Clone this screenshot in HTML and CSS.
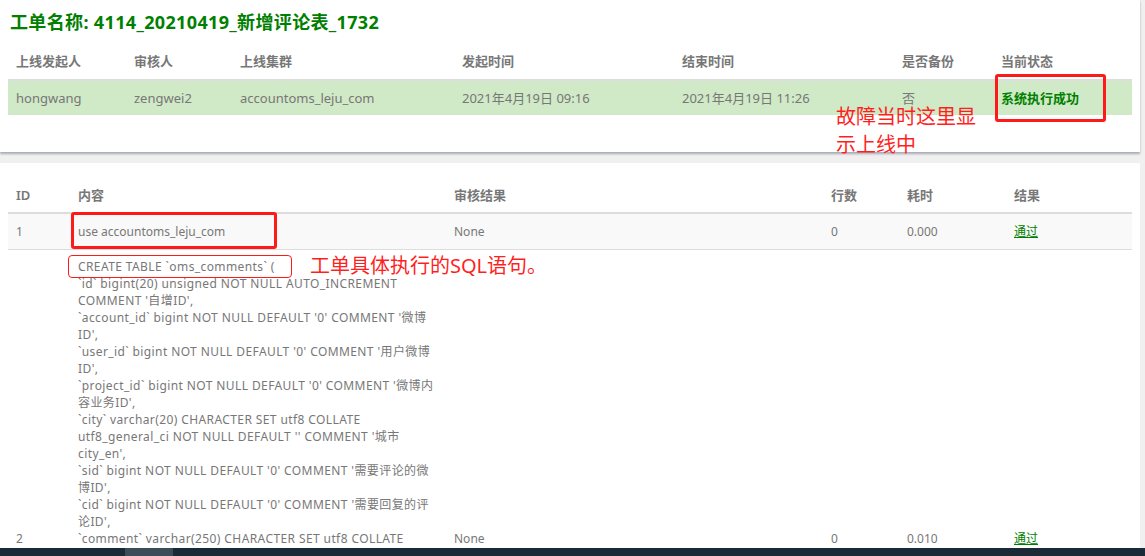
FILE: index.html
```html
<!DOCTYPE html>
<html lang="zh-CN">
<head>
<meta charset="utf-8">
<title>工单详情</title>
<link rel="stylesheet" href="styles.css">
</head>
<body>
<section class="panel panel-top">
  <h2 class="title">工单名称: 4114_20210419_新增评论表_1732</h2>
  <table class="info-table">
    <colgroup>
      <col class="c1"><col class="c2"><col class="c3"><col class="c4"><col class="c5"><col class="c6"><col class="c7">
    </colgroup>
    <thead>
      <tr><th>上线发起人</th><th>审核人</th><th>上线集群</th><th>发起时间</th><th>结束时间</th><th>是否备份</th><th>当前状态</th></tr>
    </thead>
    <tbody>
      <tr class="ok-row">
        <td>hongwang</td><td>zengwei2</td><td>accountoms_leju_com</td><td>2021年4月19日 09:16</td><td>2021年4月19日 11:26</td><td>否</td>
        <td><div class="anchor"><span class="status">系统执行成功</span><span class="hl-box hl-status"></span></div></td>
      </tr>
    </tbody>
  </table>
  <div class="note note-status">故障当时这里显示上线中</div>
</section>

<section class="panel panel-list">
  <table class="sql-table">
    <colgroup>
      <col class="s1"><col class="s2"><col class="s3"><col class="s4"><col class="s5"><col class="s6">
    </colgroup>
    <thead>
      <tr><th>ID</th><th>内容</th><th>审核结果</th><th>行数</th><th>耗时</th><th>结果</th></tr>
    </thead>
    <tbody>
      <tr class="row-odd">
        <td>1</td>
        <td><div class="anchor">use accountoms_leju_com<span class="hl-box hl-use"></span></div></td>
        <td>None</td><td>0</td><td>0.000</td><td><a class="pass" href="#">通过</a></td>
      </tr>
      <tr class="row-even">
        <td>2</td>
        <td>
          <div class="anchor sql">CREATE TABLE `oms_comments` (<br>
`id` bigint(20) unsigned NOT NULL AUTO_INCREMENT<br>
COMMENT '自增ID',<br>
`account_id` bigint NOT NULL DEFAULT '0' COMMENT '微博<br>
ID',<br>
`user_id` bigint NOT NULL DEFAULT '0' COMMENT '用户微博<br>
ID',<br>
`project_id` bigint NOT NULL DEFAULT '0' COMMENT '微博内<br>
容业务ID',<br>
`city` varchar(20) CHARACTER SET utf8 COLLATE<br>
utf8_general_ci NOT NULL DEFAULT '' COMMENT '城市<br>
city_en',<br>
`sid` bigint NOT NULL DEFAULT '0' COMMENT '需要评论的微<br>
博ID',<br>
`cid` bigint NOT NULL DEFAULT '0' COMMENT '需要回复的评<br>
论ID',<br>
`comment` varchar(250) CHARACTER SET utf8 COLLATE<br>
utf8_general_ci NOT NULL DEFAULT '' COMMENT '评论内<br>
容',<br>
`status` tinyint NOT NULL DEFAULT '0' COMMENT '状态：0<br>
待处理 1 已处理',<br>
`comment_id` bigint NOT NULL DEFAULT '0' COMMENT '评论<br>
ID',<br>
`created_at` datetime NOT NULL DEFAULT<br>
CURRENT_TIMESTAMP COMMENT '创建时间',<br>
`updated_at` datetime NOT NULL DEFAULT<br>
CURRENT_TIMESTAMP ON UPDATE CURRENT_TIMESTAMP<br>
COMMENT '更新时间',<br>
PRIMARY KEY (`id`),<br>
KEY `idx_account_id` (`account_id`),<br>
KEY `idx_sid` (`sid`)<br>
) ENGINE=InnoDB DEFAULT CHARSET=utf8mb4 COMMENT='评<br>
论表';<span class="hl-box hl-create"></span><span class="note note-sql">工单具体执行的SQL语句。</span></div>
        </td>
        <td>None</td><td>0</td><td>0.010</td><td><a class="pass" href="#">通过</a></td>
      </tr>
    </tbody>
  </table>
</section>

<div class="taskbar"><span class="task-active"></span></div>
</body>
</html>
```

FILE: styles.css
```css
html, body {
  margin: 0;
  padding: 0;
}

body {
  background: #f0f0f0;
  font-family: "Noto Sans", "Noto Sans CJK SC", sans-serif;
  color: #777;
  font-size: 13px;
}

.panel {
  background: #fff;
  width: 1140px;
  box-sizing: border-box;
  position: relative;
}

.panel-top {
  padding: 0 8px 37px;
  height: 152px;
  box-shadow: 0 2px 2px rgba(110, 115, 140, 0.55);
}

.title {
  margin: 0;
  padding: 10px 2px 0;
  font-size: 18px;
  line-height: 24px;
  font-weight: 700;
  color: #008000;
  letter-spacing: 0.35px;
}

table {
  border-collapse: separate;
  border-spacing: 0;
  table-layout: fixed;
  width: 1124px;
}

th {
  text-align: left;
  font-weight: 600;
  color: #777;
}

.info-table {
  margin-top: 10px;
}

.info-table th {
  padding: 8px;
  line-height: 19px;
  font-size: 13px;
}

.info-table td {
  padding: 8px;
  line-height: 18px;
  border-top: 2px solid #ddd;
  background: #d0e9c6;
  white-space: nowrap;
}

.c1 { width: 118px; }
.c2 { width: 106px; }
.c3 { width: 222px; }
.c4 { width: 220px; }
.c5 { width: 220px; }
.c6 { width: 99px; }
.c7 { width: 139px; }

.anchor {
  position: relative;
}

.status {
  color: #008000;
  font-weight: 700;
}

.hl-box {
  position: absolute;
  box-sizing: border-box;
  border: 3px solid #ff1a1a;
  border-radius: 3px;
}

.hl-status {
  left: -6px;
  top: -15px;
  width: 111px;
  height: 48px;
}

.note {
  position: absolute;
  color: #ff1f1f;
  font-size: 20px;
  line-height: 28px;
  font-weight: 400;
}

.note-status {
  left: 836px;
  top: 103px;
  width: 150px;
}

.panel-list {
  margin-top: 11px;
  padding: 15px 8px 0;
  min-height: 400px;
}

.sql-table th {
  padding: 8px;
  line-height: 18px;
  font-size: 13px;
  border-bottom: 2px solid #ddd;
}

.sql-table td {
  padding: 8px;
  font-size: 12px;
  vertical-align: middle;
}

.row-odd td {
  background: #f9f9f9;
  line-height: 19px;
  border-bottom: 1px solid #ddd;
}

.row-even td {
  line-height: 17px;
}

.s1 { width: 62px; }
.s2 { width: 376px; }
.s3 { width: 377px; }
.s4 { width: 76px; }
.s5 { width: 107px; }
.s6 { width: 126px; }

.hl-use {
  left: -7px;
  top: -10px;
  width: 206px;
  height: 37px;
}

.sql {
  white-space: nowrap;
  letter-spacing: 0.4px;
}

.hl-create {
  left: -10px;
  top: -3px;
  width: 224px;
  height: 23px;
  border-width: 1px;
  border-radius: 4px;
}

.note-sql {
  left: 232px;
  top: -4px;
  line-height: 24px;
  letter-spacing: 0;
}

.pass {
  color: #008000;
  text-decoration: underline;
}

.taskbar {
  position: fixed;
  left: 0;
  right: 0;
  bottom: 0;
  height: 8px;
  background: #1b2a37;
}

.task-active {
  position: absolute;
  left: 125px;
  top: 0;
  width: 48px;
  height: 8px;
  background: #3d4d58;
}
```
